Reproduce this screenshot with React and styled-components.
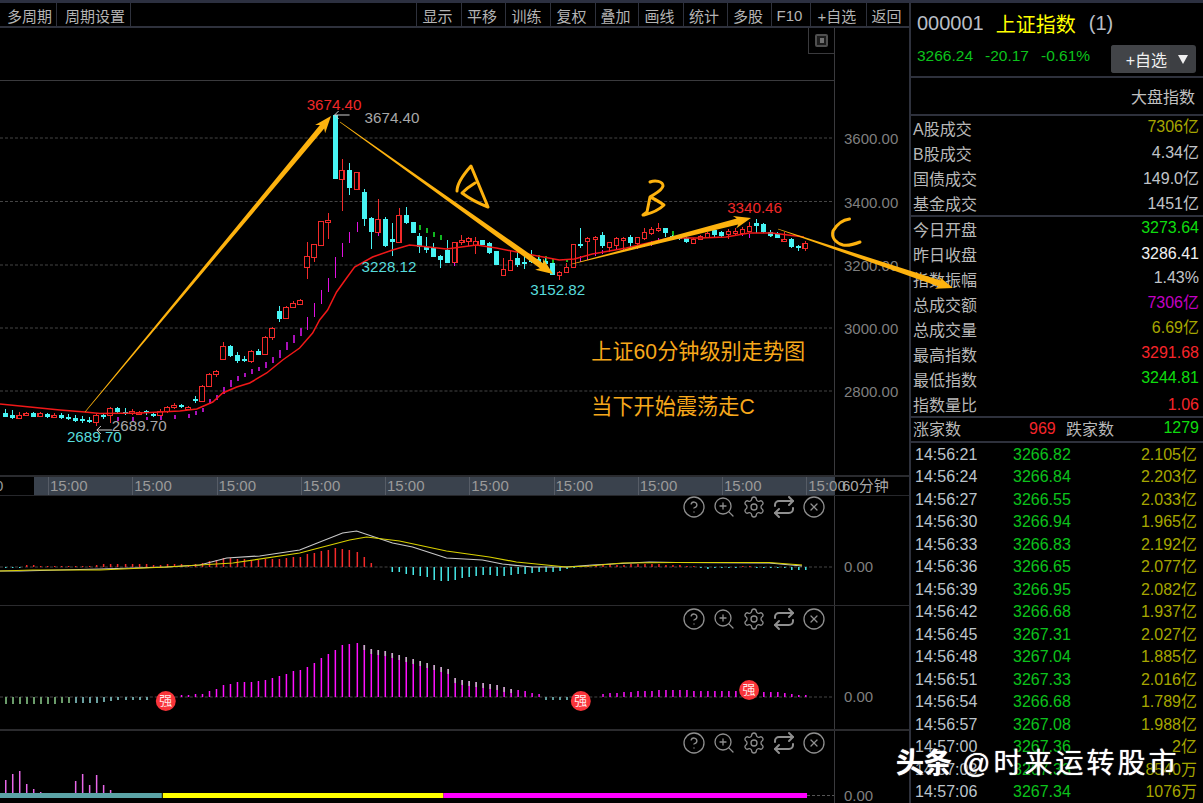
import React from "react";
import styled, { createGlobalStyle } from "styled-components";
import { CircleHelp, ZoomIn, Settings, Repeat, CircleX } from "lucide-react";

const FONT = `"Liberation Sans", "Noto Sans CJK SC", sans-serif`;
const ORANGE = "#fdb20e";

const Global = createGlobalStyle`
  html, body { margin: 0; padding: 0; background: #000; overflow: hidden; }
  body { font-family: ${FONT}; }
`;

const Page = styled.div`
  position: relative;
  width: 1203px;
  height: 803px;
  background: #000;
  overflow: hidden;
  color: #bbb;
`;
const TopStrip = styled.div`
  height: 3px;
  background: #2c3040;
`;
const Body = styled.div`
  display: flex;
  height: 800px;
`;
const Main = styled.div`
  width: 909px;
  display: flex;
  flex-direction: column;
  flex: none;
`;
const Toolbar = styled.div`
  display: flex;
  height: 25px;
  flex: none;
  box-sizing: border-box;
  border-bottom: 2px solid #2e313c;
`;
const ToolGap = styled.div`
  flex: 1;
`;
const ToolButton = styled.div`
  width: ${(p) => p.$w}px;
  flex: none;
  box-sizing: border-box;
  display: flex;
  align-items: center;
  justify-content: center;
  padding: ${(p) => (p.$noLeft || p.$right ? "1px 0 0 3px" : "1px 3px 0 0")};
  font-size: 15px;
  color: #b4b4b4;
  border-left: ${(p) => (p.$noLeft ? "0" : "1px solid #2e313c")};
  border-right: ${(p) => (p.$right ? "1px solid #2e313c" : "0")};
  white-space: nowrap;
`;
const Pane = styled.div`
  position: relative;
  display: grid;
  grid-template-columns: 835px 74px;
  height: ${(p) => p.$h}px;
  flex: none;
  box-sizing: border-box;
  border-bottom: ${(p) => p.$line}px solid #2b2b2e;
`;
const Plot = styled.svg`
  display: block;
  width: 835px;
  height: 100%;
  border-right: 1px solid #3a3a3d;
  box-sizing: border-box;
  font-family: ${FONT};
`;
const AxisSvg = styled.svg`
  display: block;
  width: 74px;
  height: 100%;
  font-family: ${FONT};
`;
const PaneIcons = styled.div`
  position: absolute;
  top: ${(p) => p.$top}px;
  left: 682px;
  display: flex;
  gap: 6px;
  color: #8f8f8f;
`;
const CornerBox = styled.div`
  position: absolute;
  left: 808px;
  top: 0;
  width: 26px;
  height: 26px;
  box-sizing: border-box;
  border-left: 1px solid #3a3a3d;
  border-bottom: 1px solid #3a3a3d;
  display: flex;
  align-items: center;
  justify-content: center;
`;
const CornerGlyph = styled.div`
  width: 13px;
  height: 13px;
  box-sizing: border-box;
  border: 2px solid #4f4f4f;
  border-radius: 2px;
  display: flex;
  justify-content: center;
  align-items: center;
  background: #1c1c1c;
  &::after {
    content: "";
    width: 4px;
    height: 5px;
    background: #707070;
  }
`;
const TimeRow = styled.div`
  display: flex;
  height: 21px;
  flex: none;
  box-sizing: border-box;
  border-top: 2px solid #2a2b2f;
  border-bottom: 1px solid #26272b;
  font-size: 15px;
  line-height: 18px;
`;
const TimeStub = styled.div`
  width: 34px;
  flex: none;
  overflow: hidden;
  color: #999;
  text-indent: -5px;
`;
const TimeTrack = styled.div`
  width: 801px;
  flex: none;
  display: flex;
  padding-left: 14px;
  box-sizing: border-box;
  background: #3a424d;
`;
const TimeTick = styled.div`
  width: 84.25px;
  flex: none;
  box-sizing: border-box;
  border-left: 1px solid #565c66;
  padding-left: 1px;
  color: #9a9a9a;
  white-space: nowrap;
`;
const PeriodLabel = styled.div`
  padding-left: 7px;
  color: #a8a8a8;
  white-space: nowrap;
  z-index: 1;
`;

const Side = styled.div`
  flex: 1;
  min-width: 0;
  box-sizing: border-box;
  border-left: 2px solid #2e313c;
  display: flex;
  flex-direction: column;
  font-size: 16px;
`;
const SideHeader = styled.div`
  height: 75px;
  flex: none;
  box-sizing: border-box;
  border-bottom: 2px solid #2e313c;
  padding: 8px 7px 0 6px;
`;
const TitleRow = styled.div`
  display: flex;
  align-items: center;
  height: 24px;
  font-size: 20px;
  color: #b9bec6;
  white-space: nowrap;
`;
const TitleName = styled.span`
  color: #ffff00;
  margin: 0 13px 0 12px;
`;
const QuoteRow = styled.div`
  display: flex;
  align-items: center;
  height: 30px;
  margin-top: 9px;
  font-size: 15.5px;
  color: #0cc21c;
  white-space: nowrap;
`;
const QuoteNum = styled.span`
  margin-right: 12px;
  position: relative;
  top: -3px;
`;
const AddButton = styled.div`
  margin-left: auto;
  width: 85px;
  height: 28px;
  display: flex;
  border-radius: 3px;
  overflow: hidden;
  background: #3d3f43;
  color: #f0f0f0;
  font-size: 16px;
`;
const AddLabel = styled.div`
  width: 59px;
  display: flex;
  align-items: center;
  justify-content: flex-end;
  padding-right: 3px;
  box-sizing: border-box;
  background: #424448;
`;
const AddCaret = styled.div`
  flex: 1;
  display: flex;
  align-items: center;
  justify-content: center;
  &::after {
    content: "";
    border-left: 5px solid transparent;
    border-right: 5px solid transparent;
    border-top: 9px solid #f0f0f0;
  }
`;
const SideTitle = styled.div`
  height: 38px;
  flex: none;
  box-sizing: border-box;
  border-bottom: 2px solid #2e313c;
  display: flex;
  align-items: center;
  justify-content: flex-end;
  padding-right: 8px;
  color: #c0c0c0;
`;
const StatGroup = styled.div`
  flex: none;
  height: ${(p) => p.$h}px;
  box-sizing: border-box;
  border-bottom: 2px solid #2e313c;
`;
const StatRow = styled.div`
  height: 25px;
  display: flex;
  justify-content: space-between;
  align-items: baseline;
  line-height: 27px;
  padding: 0 4px 0 2px;
  color: #b8b8b8;
  white-space: nowrap;
`;
const StatValue = styled.span`
  color: ${(p) => p.$c};
  position: relative;
  top: ${(p) => -(p.$lift ?? 2)}px;
`;
const BreadthRow = styled.div`
  height: 25px;
  flex: none;
  box-sizing: border-box;
  border-bottom: 2px solid #2e313c;
  display: grid;
  grid-template-columns: 116px 22px 15px 1fr;
  align-items: baseline;
  line-height: 24px;
  padding: 0 4px 0 2px;
  color: #b8b8b8;
  white-space: nowrap;
`;
const FallGroup = styled.div`
  display: flex;
  justify-content: space-between;
`;
const TickList = styled.div`
  flex: 1;
  display: flex;
  flex-direction: column;
  overflow: hidden;
`;
const TickRow = styled.div`
  height: 22.47px;
  flex: none;
  display: grid;
  grid-template-columns: 98px 1fr auto;
  align-items: baseline;
  line-height: 23px;
  padding: 0 6px 0 4px;
  white-space: nowrap;
  color: #bcc4cc;
`;
const TickPrice = styled.span`
  color: #0cc21c;
`;
const TickVol = styled.span`
  color: #a6a600;
`;
const Watermark = styled.div`
  position: absolute;
  left: 896px;
  top: 746px;
  font-size: 28px;
  line-height: 36px;
  color: #fff;
  letter-spacing: 3px;
  white-space: nowrap;
  text-shadow: 0 0 1px #fff, 0 0 3px rgba(0, 0, 0, 0.9);
`;
const Strong = styled.span`
  font-weight: 700;
  letter-spacing: 0;
  margin-right: 10px;
`;
const Overlay = styled.svg`
  position: absolute;
  left: 0;
  top: 0;
  pointer-events: none;
`;

const toX = (i) => Math.round(5 + 7.03 * i);

// type, wick top, wick bottom, body top, body bottom (early: zoom units, y = 300 + z/3)
const early = [
  ["c",327,352,340,350],["c",330,356,345,355],["r",335,358,344,355],["r",335,348,339,346],["c",336,352,339,350],
  ["r",336,351,340,348],["c",338,354,342,352],["r",340,353,344,350],["c",340,358,345,355],["c",342,360,350,358],
  ["c",345,366,353,362],["c",348,368,358,362],["c",350,368,359,363],["r",343,378,346,365],["c",343,356,346,352],
  ["r",322,370,325,345],["c",320,338,323,335],["c",325,345,335,338],["r",328,345,333,340],["r",332,344,335,340],
  ["c",330,344,334,340],["c",338,352,342,347],["r",328,348,332,345],["r",318,338,322,332],["r",310,326,314,321],
  ["c",313,324,315,321],["r",318,328,320,324],["c",288,310,296,302],["r",255,305,258,303],["r",220,262,222,258],
  ["r",210,232,213,223],["r",125,180,138,176],["c",135,172,138,168],["c",155,188,165,182],["c",168,186,178,182],
  ["r",150,188,152,182],["c",148,166,152,164],["r",108,165,111,163],["r",82,120,84,112],["c",18,66,32,56],
  ["r",17,58,20,54],["r",3,22,8,20],["r",-2,12,0,12],
].map(([t, a, b, c, d]) => [t, 300 + a / 3, 300 + b / 3, 300 + c / 3, 300 + d / 3]);

const later = [
  ["r",242,279,256,267],["r",244,262,244,257],["r",221,245,221,245],["r",213,239,220,221],["c",115,179,115,179],
  ["r",159,211,170,179],["c",163,195,170,188],["r",172,189,172,189],["c",189,226,192,219],["c",217,249,218,232],
  ["r",199,232,219,232],["c",217,247,219,246],["c",223,256,239,242],["r",208,242,215,242],["c",207,224,215,223],
  ["c",222,233,222,233],["c",233,253,236,247],["c",237,253,247,250],["c",243,257,247,257],["c",255,268,256,260],
  ["c",240,263,250,263],["r",242,262,242,262],["r",235,245,240,242],["r",237,245,238,241],["r",237,254,241,245],
  ["c",240,245,240,245],["c",242,254,243,253],["c",251,265,251,265],["r",258,275,269,275],["r",250,270,260,270],
  ["c",252,267,258,265],["c",255,269,262,264],["c",250,263,257,262],["c",257,264,259,263],["c",258,265,261,264],
  ["c",263,275,263,275],["r",271,280,272,275],["r",263,272,267,272],["r",244,267,244,267],["c",228,248,244,246],
  ["r",237,258,238,241],["r",236,252,237,239],["c",232,248,235,246],["r",242,252,242,247],["r",237,248,238,245],
  ["r",237,248,238,239],["c",235,247,237,243],["r",237,247,237,243],["r",228,240,232,238],["r",227,235,229,233],
  ["r",223,232,228,230],["c",228,237,228,233],["c",235,240,236,239],["c",236,240,237,239],["c",237,243,238,242],
  ["r",238,244,239,243],["r",235,240,236,239],["r",232,237,233,237],["c",227,237,230,235],["c",231,237,232,236],
  ["r",229,239,231,234],["r",228,235,231,233],["r",227,235,229,233],["r",222,232,226,231],["c",219,233,223,226],
  ["c",223,233,224,232],["c",230,237,232,236],["c",232,238,234,238],["r",232,242,239,240],["c",238,248,239,247],
  ["c",245,251,246,248],["r",241,251,243,248],
];
const candles = [...early, ...later];

const magenta = [
  [16,417,421],[18,417,421],[20,417,420],[22,416,420],[24,415,419],[26,414,418],[27,411,415],[28,408,412],
  [29,399,404],[30,395,400],[31,387,394],[32,380,387],[33,376,381],[34,373,377],[35,369,374],[36,367,371],
  [37,362,368],[38,357,363],[39,350,358],[40,342,350],[41,335,343],[42,328,336],[43,317,330],[44,303,317],
  [45,290,304],[46,278,292],[47,257,278],[48,243,257],[49,232,243],[50,222,232],[51,219,225],
  [53,232,236],[56,225,229],[64,263,266],[66,241,246],[82,256,262],[83,255,260],[84,252,256],[85,250,254],
  [86,248,252],[87,247,250],[88,246,250],[89,246,250],[90,244,249],[91,243,247],[92,241,246],[93,238,243],
  [105,232,236],[106,234,238],[107,228,232],
];
const greens = [[59,225,230],[60,228,233],[61,232,237],[62,235,240],[64,243,246],[76,255,260],[77,256,261],[78,259,263],[80,259,262],[81,257,262],[95,231,236],[109,232,237],[110,234,238]];

const ma = "0,404 30,407 60,410 85,412 100,413.5 140,413 180,411 197,409 213,402 223,393 237,387 250,383 267,373 283,360 300,348 313,333 320,320 328,310 337,292 347,278 355,267 373,257 393,250 410,245 420,246 447,249 477,245 497,248 533,255 560,260 575,259 593,254 627,248 670,238 700,238 727,237 750,233 773,233 805,237";

const m1Up = { 3:2,4:2,5:1,6:1,7:1,8:1,9:1,10:1,11:1,12:1,13:2,14:3,15:3,16:3,17:3,18:3,19:3,20:3,21:2,22:2,23:3,24:3,25:3,26:2,27:3,28:4,29:6,30:7,31:9,32:9,33:8,34:8,35:7,36:7,37:8,38:8,39:8,40:9,41:10,42:10,43:13,44:14,45:16,46:17,47:19,48:18,49:17,50:15,51:10,52:4,
  83:2,84:2,85:3,86:3,87:2,88:2,89:3,90:3,91:3,92:3,93:3,94:2,95:2,96:2,97:1,98:1,105:1,106:1 };
const m1Down = { 0:1,1:1,2:1,55:5,56:5,57:7,58:8,59:9,60:10,61:13,62:14,63:14,64:13,65:11,66:10,67:9,68:8,69:8,70:9,71:9,72:8,73:7,74:7,75:6,76:5,77:5,78:5,79:4,80:2,81:1,
  99:1,100:2,101:1,102:1,103:1,104:1,107:1,108:1,109:1,110:1,111:1,112:3,113:3,114:3 };

const m2Up = { 25:2,26:2,27:3,28:3,29:6,30:8,31:12,32:13,33:15,34:15,35:15,36:16,37:17,38:19,39:21,40:23,41:26,42:27,43:30,44:34,45:39,46:43,47:47,48:52,49:53,50:54,51:52,52:48,53:47,54:46,55:44,56:42,57:40,58:38,59:36,60:34,61:32,62:30,63:28,64:19,65:17,66:16,67:15,68:14,69:13,70:12,71:10,72:8,73:7,74:6,75:4,76:3,
  85:3,86:4,87:4,88:5,89:5,90:6,91:6,92:6,93:7,94:7,95:7,96:7,97:7,98:6,99:6,100:6,101:6,102:6,103:6,104:6,105:6,108:5,109:5,110:5,111:4,112:3,113:2,114:2 };
const m2Down = [7,7,7,7,7,7,7,7,6,6,6,6,6,6,5,4,3,3,3,3,3];
const vol = { 0:13,1:19,2:22,3:9,4:4,5:1,10:12,11:19,12:8,13:18,14:8,15:3 };

const dif = "0,571 20,571 100,569 133,568 167,567 200,565 227,558 260,556 300,550 343,533 357,531 393,543 413,547 447,558 483,560 503,564 533,567 567,567 593,565 650,562 677,562.5 770,563 803,566";
const dea = "0,571 33,570 100,570 167,567 233,563 300,553 350,540 367,537 400,541 447,551 490,557 517,562 567,567 590,566 623,563 677,562.5 770,562.5 803,565";

const Candle = ({ d, i }) => {
  const [t, a, b, c, e] = d;
  const x = toX(i);
  if (t === "c") {
    return (
      <g fill="#47f4f4" shapeRendering="crispEdges">
        <rect x={x} y={a} width={1} height={b - a} />
        <rect x={x - 2} y={c} width={5} height={Math.max(e - c, 2)} />
      </g>
    );
  }
  return (
    <g shapeRendering="crispEdges">
      <rect x={x} y={a} width={1} height={b - a} fill="#f22a2a" />
      <rect x={x - 2} y={c + 0.5} width={4.5} height={Math.max(e - c, 2)} fill="#000" stroke="#f22a2a" strokeWidth={1.2} />
    </g>
  );
};

const Badge = ({ x, y }) => (
  <g>
    <circle cx={x} cy={y} r={10} fill="#f8343a" />
    <text x={x} y={y + 4.5} fontSize={13} fill="#ffe8e8" textAnchor="middle">强</text>
  </g>
);

const taper = (x1, y1, x2, y2, w1, w2, hl, hw) => {
  const L = Math.hypot(x2 - x1, y2 - y1);
  const ux = (x2 - x1) / L, uy = (y2 - y1) / L;
  const nx = -uy, ny = ux;
  const bx = x2 - ux * hl, by = y2 - uy * hl;
  const p = (x, y) => `${x.toFixed(1)},${y.toFixed(1)}`;
  return [
    p(x1 + nx * w1 / 2, y1 + ny * w1 / 2),
    p(bx + nx * w2 / 2, by + ny * w2 / 2),
    p(bx + nx * hw / 2 - ux * 3, by + ny * hw / 2 - uy * 3),
    p(x2, y2),
    p(bx - nx * hw / 2 - ux * 3, by - ny * hw / 2 - uy * 3),
    p(bx - nx * w2 / 2, by - ny * w2 / 2),
    p(x1 - nx * w1 / 2, y1 - ny * w1 / 2),
  ].join(" ");
};

const PaneTools = ({ top }) => (
  <PaneIcons $top={top}>
    <CircleHelp size={24} strokeWidth={1.3} />
    <ZoomIn size={24} strokeWidth={1.3} />
    <Settings size={24} strokeWidth={1.3} />
    <Repeat size={24} strokeWidth={2} />
    <CircleX size={24} strokeWidth={1.3} />
  </PaneIcons>
);

const Bars = ({ data, base, color, up }) =>
  Object.entries(data).map(([i, h]) => (
    <rect key={i} x={toX(+i)} y={up ? base - h : base} width={1.5} height={h} fill={color} />
  ));

const AxisText = ({ y, children }) => (
  <text x={844} y={y + 6} fontSize={15} fill="#7f7f7f">{children}</text>
);
const DashLine = ({ y, x2 = 835 }) => (
  <line x1={0} x2={x2} y1={y} y2={y} stroke="#454545" strokeWidth={1} strokeDasharray="3 2" shapeRendering="crispEdges" />
);

const GRID = [138, 201.5, 265, 328, 391];
const PRICES = ["3600.00", "3400.00", "3200.00", "3000.00", "2800.00"];
const TOOLS = [["显示", 45], ["平移", 44], ["训练", 45], ["复权", 45], ["叠加", 43], ["画线", 45], ["统计", 44], ["多股", 44], ["F10", 39], ["+自选", 56], ["返回", 43]];
const STATS_A = [
  ["A股成交", "7306亿", "#a6a600", 3],
  ["B股成交", "4.34亿", "#c0c4c8", 2],
  ["国债成交", "149.0亿", "#c0c4c8", 1],
  ["基金成交", "1451亿", "#c0c4c8", 1],
];
const STATS_B = [
  ["今日开盘", "3273.64", "#0fdc0f", 3],
  ["昨日收盘", "3286.41", "#f0f0f0", 2],
  ["指数振幅", "1.43%", "#c0c4c8", 3],
  ["总成交额", "7306亿", "#c400c4", 3],
  ["总成交量", "6.69亿", "#a6a600", 3],
  ["最高指数", "3291.68", "#f5252a", 3],
  ["最低指数", "3244.81", "#0fdc0f", 3],
  ["指数量比", "1.06", "#f5252a", 1],
];
const TICKS = [
  ["14:56:21","3266.82","2.105亿"],["14:56:24","3266.84","2.203亿"],["14:56:27","3266.55","2.033亿"],
  ["14:56:30","3266.94","1.965亿"],["14:56:33","3266.83","2.192亿"],["14:56:36","3266.65","2.077亿"],
  ["14:56:39","3266.95","2.082亿"],["14:56:42","3266.68","1.937亿"],["14:56:45","3267.31","2.027亿"],
  ["14:56:48","3267.04","1.885亿"],["14:56:51","3267.33","2.016亿"],["14:56:54","3266.68","1.789亿"],
  ["14:56:57","3267.08","1.988亿"],["14:57:00","3267.36","2亿"],["14:57:03","3267.33","8540万"],
  ["14:57:06","3267.34","1076万"],
];

export default function App() {
  return (
    <Page>
      <Global />
      <TopStrip />
      <Body>
        <Main>
          <Toolbar>
            <ToolButton $w={56} $noLeft>多周期</ToolButton>
            <ToolButton $w={75} $right>周期设置</ToolButton>
            <ToolGap />
            {TOOLS.map(([t, w]) => (
              <ToolButton key={t} $w={w}>{t}</ToolButton>
            ))}
          </Toolbar>

          <Pane $h={447} $line={0}>
            <Plot viewBox="0 28 835 447" preserveAspectRatio="none">
              <line x1={0} x2={835} y1={80.5} y2={80.5} stroke="#3a3a3d" />
              {GRID.map((y) => <DashLine key={y} y={y} />)}
              {magenta.map(([i, a, b]) => (
                <rect
                  key={i}
                  x={toX(i)}
                  y={a}
                  width={i < 43 ? 2 : 1}
                  height={b - a}
                  fill={i < 43 ? "#a810b8" : "#e010e0"}
                  shapeRendering="crispEdges"
                />
              ))}
              {greens.map(([i, a, b]) => (
                <rect key={i} x={toX(i)} y={a} width={1.5} height={b - a} fill="#10b820" shapeRendering="crispEdges" />
              ))}
              {candles.map((d, i) => <Candle key={i} d={d} i={i} />)}
              <polyline points={ma} fill="none" stroke="#f01818" strokeWidth={1.5} />
              <g fontSize={15.2}>
                <text x={307} y={110} fill="#f02828">3674.40</text>
                <text x={365} y={123} fill="#a8a8a8">3674.40</text>
                <text x={362} y={272} fill="#58dcdc">3228.12</text>
                <text x={531} y={295} fill="#58dcdc">3152.82</text>
                <text x={728} y={213} fill="#f02828">3340.46</text>
                <text x={112} y={431} fill="#a8a8a8">2689.70</text>
                <text x={67} y={442} fill="#58dcdc">2689.70</text>
              </g>
              <path d="M350 115H335M339 111L335 115L339 119" fill="none" stroke="#cfcfcf" />
              <path d="M112 430H97M101 426L97 430L101 434" fill="none" stroke="#cfcfcf" />
              <g fontSize={21.2} fill="#f7a81b">
                <text x={592} y={359}>上证60分钟级别走势图</text>
                <text x={592} y={414}>当下开始震荡走C</text>
              </g>
            </Plot>
            <AxisSvg viewBox="835 28 74 447" preserveAspectRatio="none">
              {PRICES.map((p, i) => <AxisText key={p} y={GRID[i]}>{p}</AxisText>)}
            </AxisSvg>
            <CornerBox><CornerGlyph /></CornerBox>
          </Pane>

          <TimeRow>
            <TimeStub>0</TimeStub>
            <TimeTrack>
              {Array.from({ length: 10 }, (_, i) => <TimeTick key={i}>15:00</TimeTick>)}
            </TimeTrack>
            <PeriodLabel>60分钟</PeriodLabel>
          </TimeRow>

          <Pane $h={110} $line={1}>
            <Plot viewBox="0 496 835 109" preserveAspectRatio="none">
              <DashLine y={567} />
              <Bars data={m1Up} base={567} color="#f42a2a" up />
              <Bars data={m1Down} base={567} color="#46e8e8" />
              <polyline points={dif} fill="none" stroke="#c8c8c8" strokeWidth={1.2} />
              <polyline points={dea} fill="none" stroke="#d8d000" strokeWidth={1.2} />
            </Plot>
            <AxisSvg viewBox="835 496 74 109" preserveAspectRatio="none">
              <AxisText y={566}>0.00</AxisText>
            </AxisSvg>
            <PaneTools top={-1} />
          </Pane>

          <Pane $h={125} $line={2}>
            <Plot viewBox="0 606 835 123" preserveAspectRatio="none">
              <DashLine y={697} />
              {m2Down.map((h, i) => (
                <rect key={i} x={toX(i)} y={697} width={2} height={h} fill={i < 10 ? "#6a9c6a" : "#6aa0a0"} shapeRendering="crispEdges" />
              ))}
              {[77, 78, 79, 80, 81].map((i) => (
                <rect key={i} x={toX(i)} y={697} width={2} height={3} fill="#5f9a9a" shapeRendering="crispEdges" />
              ))}
              <Bars data={m2Up} base={697} color="#ff10ff" up />
              {Array.from({ length: 22 }, (_, k) => k + 51).map((i) => (
                <rect key={i} x={toX(i)} y={697 - (m2Up[i] || 0)} width={1.5} height={Math.min(5, (m2Up[i] || 0) / 2)} fill="#bdbdbd" />
              ))}
              <Badge x={166} y={701} />
              <Badge x={581.5} y={701} />
              <Badge x={750} y={690} />
            </Plot>
            <AxisSvg viewBox="835 606 74 123" preserveAspectRatio="none">
              <AxisText y={696}>0.00</AxisText>
            </AxisSvg>
            <PaneTools top={1} />
          </Pane>

          <Pane $h={72} $line={0}>
            <Plot viewBox="0 731 835 72" preserveAspectRatio="none">
              <Bars data={vol} base={793} color="#e867e8" up />
              <line x1={808} x2={835} y1={795.5} y2={795.5} stroke="#555" strokeDasharray="3 2" />
              <rect x={0} y={793} width={162} height={5} fill="#5ba3a6" />
              <rect x={163} y={793} width={281} height={5} fill="#ffff00" />
              <rect x={444} y={793} width={364} height={5} fill="#ff00ff" />
            </Plot>
            <AxisSvg viewBox="835 731 74 72" preserveAspectRatio="none">
              <AxisText y={795}>0.00</AxisText>
            </AxisSvg>
            <PaneTools top={0} />
          </Pane>
        </Main>

        <Side>
          <SideHeader>
            <TitleRow>000001<TitleName>上证指数</TitleName>(1)</TitleRow>
            <QuoteRow>
              <QuoteNum>3266.24</QuoteNum>
              <QuoteNum>-20.17</QuoteNum>
              <QuoteNum>-0.61%</QuoteNum>
              <AddButton>
                <AddLabel>+自选</AddLabel>
                <AddCaret />
              </AddButton>
            </QuoteRow>
          </SideHeader>
          <SideTitle>大盘指数</SideTitle>
          <StatGroup $h={101}>
            {STATS_A.map(([l, v, c, lift]) => (
              <StatRow key={l}><span>{l}</span><StatValue $c={c} $lift={lift}>{v}</StatValue></StatRow>
            ))}
          </StatGroup>
          <StatGroup $h={201}>
            {STATS_B.map(([l, v, c, lift]) => (
              <StatRow key={l}><span>{l}</span><StatValue $c={c} $lift={lift}>{v}</StatValue></StatRow>
            ))}
          </StatGroup>
          <BreadthRow>
            <span>涨家数</span>
            <StatValue $c="#f5252a" $lift={1}>969</StatValue>
            <span />
            <FallGroup>
              <span>跌家数</span>
              <StatValue $c="#0fdc0f" $lift={2}>1279</StatValue>
            </FallGroup>
          </BreadthRow>
          <TickList>
            {TICKS.map(([t, p, v]) => (
              <TickRow key={t}>
                <span>{t}</span>
                <TickPrice>{p}</TickPrice>
                <TickVol>{v}</TickVol>
              </TickRow>
            ))}
          </TickList>
        </Side>
      </Body>

      <Overlay width={1203} height={803} viewBox="0 0 1203 803">
        <g fill={ORANGE}>
          <polygon points={taper(85, 412, 331, 116, 0.6, 5.5, 14, 13)} />
          <polygon points={taper(340, 122, 553, 274, 0.6, 6, 14, 14)} />
          <polygon points={taper(572, 264, 751, 218, 0.6, 6, 14, 13)} />
          <polygon points={taper(778, 229, 953, 288, 0.6, 6.5, 14, 13)} />
        </g>
        <g fill="none" stroke={ORANGE} strokeWidth={3} strokeLinecap="round" strokeLinejoin="round">
          <path d="M457 191C457 183 463 175 471 166C476 178 483 195 488 207C480 204 470 199 462 193C466 189 470 186 475 183" />
          <path d="M650 182C655 180 663 181 663 186C662 191 654 194 650 197L647 212L643 215M650 197C655 199 661 203 664 205C660 209 652 213 644 215" />
          <path d="M849.5 219C842 220 837 224 833 231C831 238 836 243 843 245C849 246 855 244 860 242" />
        </g>
      </Overlay>

      <Watermark><Strong>头条</Strong>@时来运转股市</Watermark>
    </Page>
  );
}
